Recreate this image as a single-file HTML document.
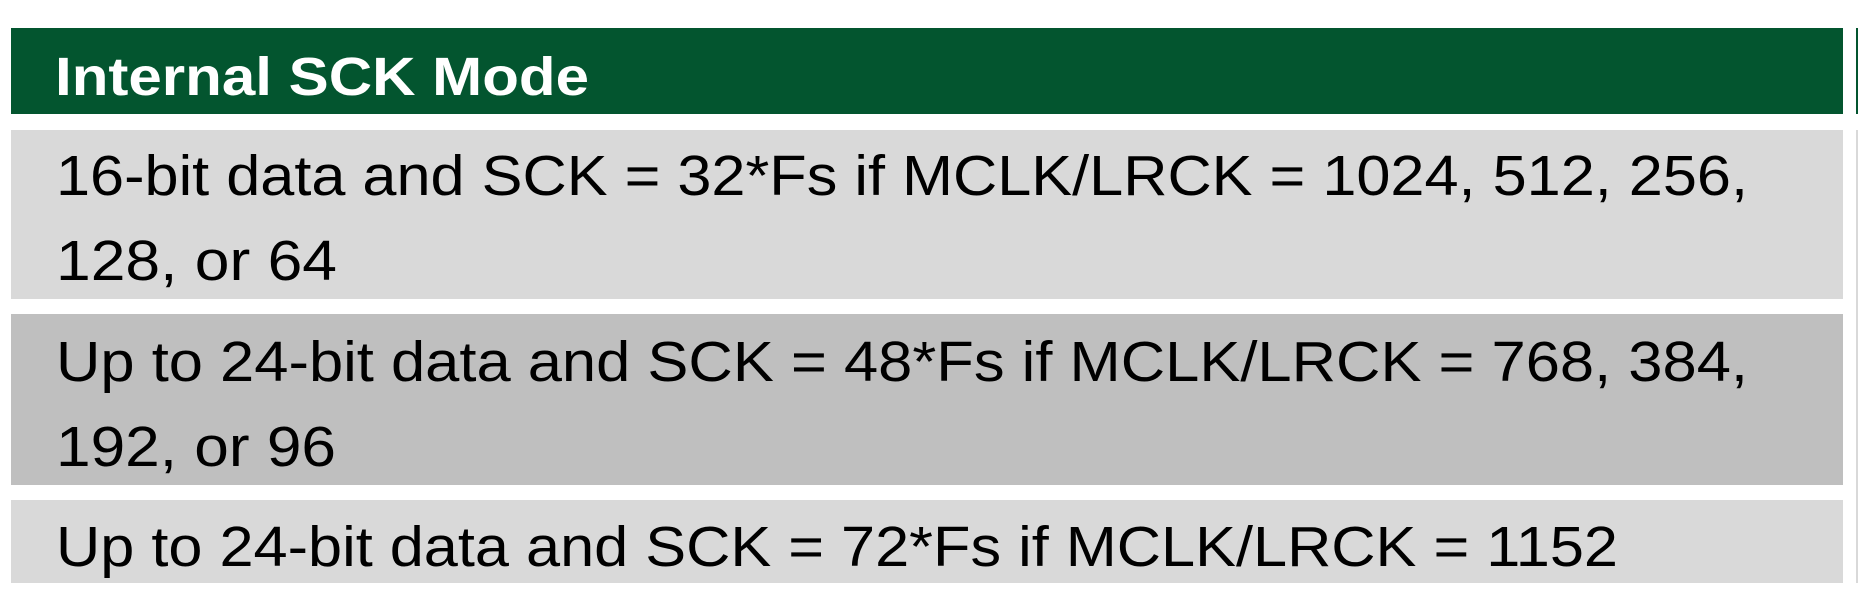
<!DOCTYPE html>
<html><head><meta charset="utf-8"><style>
html,body{margin:0;padding:0;background:#fff;width:1858px;height:602px;overflow:hidden}
</style></head><body>
<svg width="1858" height="602" xmlns="http://www.w3.org/2000/svg" font-family="'Liberation Sans', sans-serif">
<rect x="0" y="0" width="1858" height="602" fill="#fff"/>
<rect x="11" y="28" width="1832" height="86" fill="#03552F"/>
<rect x="1856" y="28" width="2" height="86" fill="#03552F"/>
<rect x="11" y="130" width="1832" height="169" fill="#D9D9D9"/>
<rect x="11" y="314" width="1832" height="171" fill="#BFBFBF"/>
<rect x="11" y="500" width="1832" height="83" fill="#D9D9D9"/>
<rect x="1856" y="130" width="2" height="453" fill="#D9D9D9"/>
<text x="55" y="95" font-size="54" font-weight="bold" fill="#fff" textLength="534" lengthAdjust="spacingAndGlyphs">Internal SCK Mode</text>
<g font-size="57" fill="#000">
<text x="56" y="195" textLength="1692" lengthAdjust="spacingAndGlyphs">16-bit data and SCK = 32*Fs if MCLK/LRCK = 1024, 512, 256,</text>
<text x="56" y="280" textLength="281" lengthAdjust="spacingAndGlyphs">128, or 64</text>
<text x="56" y="381" textLength="1692" lengthAdjust="spacingAndGlyphs">Up to 24-bit data and SCK = 48*Fs if MCLK/LRCK = 768, 384,</text>
<text x="56" y="466" textLength="280" lengthAdjust="spacingAndGlyphs">192, or 96</text>
<text x="56" y="566" textLength="1562" lengthAdjust="spacingAndGlyphs">Up to 24-bit data and SCK = 72*Fs if MCLK/LRCK = 1152</text>
</g>
</svg>
</body></html>
